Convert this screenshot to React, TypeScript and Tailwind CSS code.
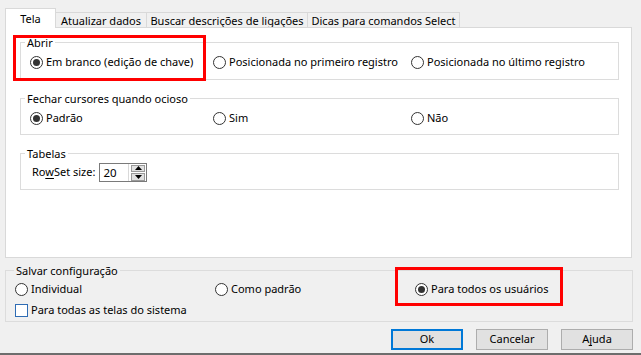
import React from 'react';

const font = { fontFamily: '"Noto Sans", "Segoe UI", sans-serif' };

function Radio({ label, checked }: { label: string; checked?: boolean }) {
  return (
    <div className="flex items-center h-[16px]">
      <span className="w-[13px] h-[13px] rounded-full border border-[#333] bg-white flex items-center justify-center shrink-0">
        {checked && <span className="w-[7px] h-[7px] rounded-full bg-[#333]" />}
      </span>
      <span className="ml-[3px] whitespace-nowrap">{label}</span>
    </div>
  );
}

function Group({
  title,
  className,
  legendClass = 'ml-[4px]',
  children,
}: {
  title: string;
  className?: string;
  legendClass?: string;
  children: React.ReactNode;
}) {
  return (
    <fieldset className={`border border-[#dcdcdc] ${className ?? ''}`}>
      <legend className={`${legendClass} px-[2px] leading-[15px]`}>{title}</legend>
      {children}
    </fieldset>
  );
}

function Tab({ label, active, width }: { label: string; active?: boolean; width: string }) {
  if (active) {
    return (
      <div className={`relative z-10 h-[20px] ${width} bg-white border border-b-0 border-[#d9d9d9] flex items-start justify-center pt-[2px] leading-[15px]`}>
        {label}
      </div>
    );
  }
  return (
    <div className={`h-[15px] mb-[1px] ${width} bg-[#f0f0f0] border border-b-0 border-l-0 border-[#d9d9d9] flex items-center justify-center leading-none whitespace-nowrap`}>
      {label}
    </div>
  );
}

function SpinBox() {
  return (
    <div className="ml-[4px] w-[48px] h-[19px] border border-[#7a7a7a] bg-white flex">
      <span className="flex-1 pl-[3px] leading-[17px] text-[11.5px]">20</span>
      <div className="w-[18px] border-l border-[#d9d9d9] flex flex-col items-center justify-center gap-[1px] pl-[1px]">
        <span className="w-[14px] h-[7px] bg-[#e1e1e1] border border-[#9a9a9a] flex items-center justify-center">
          <svg width="7" height="4" viewBox="0 0 7 4"><path d="M0 4 L3.5 0 L7 4 Z" fill="#000" /></svg>
        </span>
        <span className="w-[14px] h-[8px] bg-[#e1e1e1] border border-[#9a9a9a] flex items-center justify-center">
          <svg width="7" height="4" viewBox="0 0 7 4"><path d="M0 0 L3.5 4 L7 0 Z" fill="#000" /></svg>
        </span>
      </div>
    </div>
  );
}

function Button({ children, focused }: { children: React.ReactNode; focused?: boolean }) {
  return (
    <div
      className={`w-[72px] h-[21px] bg-[#e1e1e1] flex items-center justify-center ${
        focused ? 'border-2 border-[#0078d7]' : 'border border-[#adadad]'
      }`}
    >
      {children}
    </div>
  );
}

export default function App() {
  return (
    <div className="relative w-[641px] h-[355px] bg-[#f0f0f0] text-[11px] text-black flex flex-col overflow-hidden" style={font}>
      {/* tabs */}
      <div className="flex items-end pl-[5px] pt-[8px]">
        <Tab label="Tela" width="w-[51px]" active />
        <Tab label="Atualizar dados" width="w-[91px]" />
        <Tab label="Buscar descrições de ligações" width="w-[161px]" />
        <Tab label="Dicas para comandos Select" width="w-[152px]" />
      </div>

      {/* tab panel */}
      <div className="-mt-[1px] ml-[5px] mr-[9px] h-[231px] bg-white border border-[#d9d9d9] pl-[14px] pr-[12px] pt-[7px]">
        <Group title="Abrir" className="pt-[4px] pb-[9px]">
          <div className="flex pl-[9px]">
            <div className="w-[183px]"><Radio label="Em branco (edição de chave)" checked /></div>
            <div className="w-[198px]"><Radio label="Posicionada no primeiro registro" /></div>
            <Radio label="Posicionada no último registro" />
          </div>
        </Group>

        <Group title="Fechar cursores quando ocioso" className="mt-[11px] pt-[4px] pb-[8px]">
          <div className="flex pl-[9px]">
            <div className="w-[183px]"><Radio label="Padrão" checked /></div>
            <div className="w-[198px]"><Radio label="Sim" /></div>
            <Radio label="Não" />
          </div>
        </Group>

        <Group title="Tabelas" className="mt-[11px] pt-[2px] pb-[7px]">
          <div className="flex items-center pl-[11px]">
            <span>
              Ro<span className="underline underline-offset-2">w</span>Set size:
            </span>
            <SpinBox />
          </div>
        </Group>
      </div>

      {/* save config */}
      <Group
        title="Salvar configuração"
        legendClass="ml-[8px]"
        className="mt-[5px] ml-[5px] mr-[8px] pt-[3px] pb-[3px]"
      >
        <div className="flex pl-[9px]">
          <div className="w-[200px]"><Radio label="Individual" /></div>
          <div className="w-[200px]"><Radio label="Como padrão" /></div>
          <Radio label="Para todos os usuários" checked />
        </div>
        <div className="flex items-center h-[16px] mt-[5px] pl-[9px]">
          <span className="w-[13px] h-[13px] border border-[#2e6cb4] bg-white" />
          <span className="ml-[3px]">Para todas as telas do sistema</span>
        </div>
      </Group>

      {/* buttons */}
      <div className="flex justify-end gap-[13px] mt-[7px] pr-[8px]">
        <Button focused>Ok</Button>
        <Button>Cancelar</Button>
        <Button>
          <span>
            A<span className="underline underline-offset-2">j</span>uda
          </span>
        </Button>
      </div>

      <div className="mt-auto h-[2px] bg-[#6d6d6d]" />

      {/* red annotation boxes */}
      <div className="absolute left-[13px] top-[35px] w-[193px] h-[46px] border-[3px] border-[#ff0000]" />
      <div className="absolute left-[395px] top-[267px] w-[168px] h-[39px] border-[3px] border-[#ff0000]" />
    </div>
  );
}
